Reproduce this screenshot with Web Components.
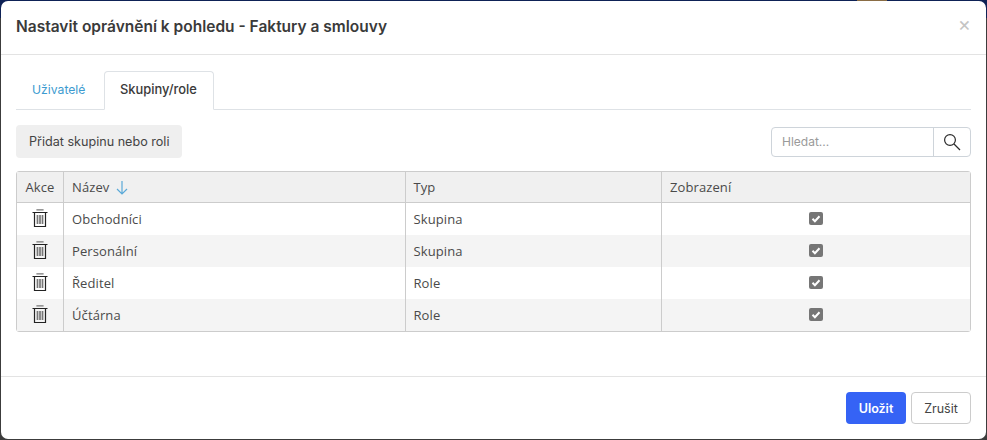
<!DOCTYPE html>
<html lang="cs">
<head>
<meta charset="utf-8">
<title>Nastavit oprávnění</title>
<style>
  html, body { margin: 0; height: 100%; overflow: hidden; }
  body {
    font-family: "Inter", "Liberation Sans", sans-serif;
    /* the page behind the modal only shows as a 1px edge */
    background:
      linear-gradient(90deg, transparent 857px, #8a6d45 857px, #8a6d45 887px, transparent 887px) 0 0 / 100% 1px no-repeat,
      linear-gradient(#0e2256 0, #0e2256 18px, #3c3c3c 18px);
  }
</style>
</head>
<body>
<permission-dialog heading="Nastavit oprávnění k pohledu - Faktury a smlouvy"></permission-dialog>

<script>
  // Rows of the permission table
  const ROWS = [
    { name: 'Obchodníci', type: 'Skupina' },
    { name: 'Personální', type: 'Skupina' },
    { name: 'Ředitel', type: 'Role' },
    { name: 'Účtárna', type: 'Role' },
  ];

  class TabBar extends HTMLElement {
    constructor() {
      super();
      this.attachShadow({ mode: 'open' });
      this.shadowRoot.innerHTML = `
        <style>
          :host { display: flex; height: 39px; box-sizing: border-box; border-bottom: 1px solid #dee2e6; font-size: 12.2px; }
          a { display: block; box-sizing: border-box; height: 39px; width: 88px; padding: 10px 0 0 15px; color: #3d9bd0; border: 1px solid transparent; border-radius: 4px 4px 0 0; }
          a.active { width: 110px; font-size: 12.9px; color: #3a3a3a; background: #fff; border-color: #dee2e6 #dee2e6 #fff; font-weight: 500; padding: 10px 0 0 15px; }
        </style>
        <a>Uživatelé</a>
        <a class="active">Skupiny/role</a>
      `;
    }
  }

  class SearchBox extends HTMLElement {
    constructor() {
      super();
      this.attachShadow({ mode: 'open' });
      this.shadowRoot.innerHTML = `
        <style>
          :host { display: flex; width: 200px; height: 30px; box-sizing: border-box; border: 1px solid #ced4da; border-radius: 4px; font-size: 12px; color: #9a9a9a; }
          .field { flex: 1; padding: 6px 0 0 10px; border-right: 1px solid #ced4da; }
          .btn { width: 36px; display: flex; align-items: center; justify-content: center; }
        </style>
        <div class="field">Hledat...</div>
        <div class="btn">
          <svg width="18" height="18" viewBox="0 0 18 18" fill="none" stroke="#2b2b2b" stroke-width="1.2">
            <circle cx="7" cy="7" r="5.4"/>
            <path d="M11 11l6 6"/>
          </svg>
        </div>
      `;
    }
  }

  class PermissionTable extends HTMLElement {
    constructor() {
      super();
      this.attachShadow({ mode: 'open' });
      const trash = `
        <svg class="up" width="16" height="18" viewBox="0 0 16 18" fill="none" stroke="#222" stroke-width="1.2">
          <path d="M0.5 3.5h15M2.5 3.5v14h11v-14"/>
          <path d="M5 1.5V0.8h6v0.7" stroke="#777"/>
          <path d="M5.5 6v9M8 6v9M10.5 6v9" stroke="#777" stroke-width="1.7"/>
        </svg>`;
      const check = `
        <svg class="up" width="14" height="13" viewBox="0 0 14 13">
          <rect width="14" height="13" rx="2" fill="#767676"/>
          <path d="M3.5 6.8l2.4 2.4L10.5 4.2" fill="none" stroke="#fff" stroke-width="2"/>
        </svg>`;
      const rows = ROWS.map(r => `
        <div class="row">
          <div class="c akce">${trash}</div>
          <div class="c">${r.name}</div>
          <div class="c">${r.type}</div>
          <div class="c mid">${check}</div>
        </div>`).join('');
      this.shadowRoot.innerHTML = `
        <style>
          :host { display: block; border: 1px solid #ccc; border-radius: 3px; font-family: "Open Sans", "Liberation Sans", sans-serif; font-size: 13px; color: #4a4a4a; letter-spacing: .1px; }
          .row { display: grid; grid-template-columns: 47px 341.5px 256.5px 1fr; height: 32px; box-sizing: border-box; }
          .row:nth-child(even) { background: #f4f4f4; }
          .row.head { height: 31px; background: #f0f0f0; border-bottom: 1px solid #ccc; }
          .c { display: flex; align-items: center; padding-left: 8px; box-sizing: border-box; border-right: 1px solid #ccc; }
          .c:last-child { border-right: 0; }
          .akce { padding: 0; justify-content: center; }
          .mid { padding: 0; justify-content: center; }
          .up { margin-bottom: 2px; }
          .sort { margin-left: 7px; }
        </style>
        <div class="row head">
          <div class="c akce">Akce</div>
          <div class="c">Název
            <svg class="sort" width="12" height="15" viewBox="0 0 12 15" fill="none" stroke="#5aa9d8" stroke-width="1.2"><path d="M6 1v13M1 9l5 5 5-5"/></svg>
          </div>
          <div class="c">Typ</div>
          <div class="c">Zobrazení</div>
        </div>
        <div class="body">${rows}</div>
      `;
    }
  }

  class PermissionDialog extends HTMLElement {
    constructor() {
      super();
      this.attachShadow({ mode: 'open' });
      this.shadowRoot.innerHTML = `
        <style>
          :host { display: flex; flex-direction: column; box-sizing: border-box; height: 438px; margin: 1px 1px 0 1px; background: #fff; border-radius: 7px; color: #333; }
          header { display: flex; justify-content: space-between; height: 54px; box-sizing: border-box; padding: 16px 15px 0 15px; border-bottom: 1px solid #e3e3e3; }
          h1 { margin: 0; font-size: 15.5px; font-weight: 600; line-height: 19px; color: #3a3a3a; }
          .close { color: #c4c4c4; font-size: 20px; line-height: 14px; }
          main { flex: 1; padding: 16px 15px 0 15px; }
          .tools { display: flex; justify-content: space-between; align-items: center; margin: 15px 0 13px; height: 33px; }
          .add { box-sizing: border-box; height: 33px; padding: 9px 13px 0; background: #efefef; border-radius: 4px; font-size: 12.6px; color: #444; }
          footer { display: flex; justify-content: flex-end; gap: 5px; height: 63px; box-sizing: border-box; padding: 15px 15px 0 0; border-top: 1px solid #e3e3e3; }
          .btn { box-sizing: border-box; height: 32px; padding-top: 9px; border-radius: 4px; font-size: 12.5px; text-align: center; }
          .save { width: 60px; background: #3563f5; color: #fff; font-weight: 600; }
          .cancel { width: 60px; border: 1px solid #ccc; color: #444; padding-top: 8px; }
        </style>
        <header>
          <h1>${this.getAttribute('heading')}</h1>
          <span class="close">×</span>
        </header>
        <main>
          <tab-bar></tab-bar>
          <div class="tools">
            <div class="add">Přidat skupinu nebo roli</div>
            <search-box></search-box>
          </div>
          <permission-table></permission-table>
        </main>
        <footer>
          <div class="btn save">Uložit</div>
          <div class="btn cancel">Zrušit</div>
        </footer>
      `;
    }
  }

  customElements.define('tab-bar', TabBar);
  customElements.define('search-box', SearchBox);
  customElements.define('permission-table', PermissionTable);
  customElements.define('permission-dialog', PermissionDialog);
</script>
</body>
</html>
